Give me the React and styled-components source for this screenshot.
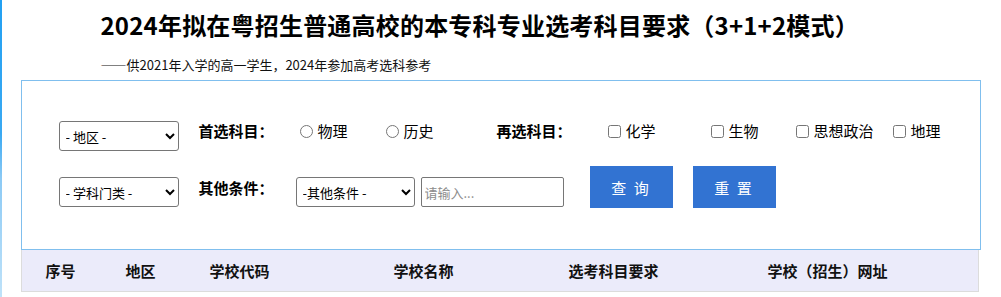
import React from "react";
import styled, { createGlobalStyle } from "styled-components";

const GlobalStyle = createGlobalStyle`
  html {
    background: #fff linear-gradient(to bottom, #22a0f2 0%, #3aa9f2 45%, #8ccaf5 60%, #bfe2f9 100%) left top / 2px 100% no-repeat;
    min-height: 100%;
  }
  body {
    margin: 0;
    font-family: "Microsoft YaHei", "Noto Sans CJK SC", "Noto Sans", sans-serif;
    color: #000;
  }
`;

const Page = styled.div`
  width: 1001px;
`;

const Heading = styled.header`
  width: 800px;
  margin: 0 auto;
`;

const Title = styled.h1`
  margin: 0;
  font-size: 24px;
  font-weight: 700;
  line-height: 50px;
  white-space: nowrap;
  letter-spacing: 0.2px;
`;

const Subtitle = styled.p`
  margin: 0;
  font-size: 13px;
  line-height: 30px;
  color: #111;
`;

const Dash = styled.span`
  font-feature-settings: "fwid";
`;

const Container = styled.div`
  width: 960px;
  margin: 0 auto;
`;

const SearchBox = styled.div`
  box-sizing: border-box;
  width: 960px;
  border: 1px solid #80bfee;
  padding: 40px 0 41px 37px;
  display: flex;
  flex-direction: column;
  gap: 15px;
`;

const Row = styled.div`
  display: flex;
  align-items: ${(p) => (p.$bottom ? "flex-end" : "flex-start")};
  height: ${(p) => p.$h}px;
`;

const Select = styled.select`
  box-sizing: border-box;
  width: ${(p) => p.$w}px;
  height: 30px;
  margin: 0 ${(p) => p.$mr || 0}px ${(p) => p.$mb || 0}px 0;
  border: 1px solid #767676;
  border-radius: 3px;
  background: #fff;
  font-family: inherit;
  font-size: 13px;
  color: #000;
  padding: 0 2px;
`;

const TextInput = styled.input`
  box-sizing: border-box;
  width: 143px;
  height: 30px;
  margin: 0 0 1px 6px;
  border: 1px solid #767676;
  border-radius: 2px;
  padding: 0 3px;
  font-family: inherit;
  font-size: 13px;
  &::placeholder {
    color: #8c8c8c;
  }
`;

const Label = styled.span`
  box-sizing: border-box;
  width: ${(p) => p.$w}px;
  margin-left: ${(p) => p.$ml || 0}px;
  margin-bottom: ${(p) => p.$mb || 0}px;
  font-size: 15px;
  font-weight: 700;
  line-height: 20px;
  white-space: nowrap;
`;

const Option = styled.label`
  display: flex;
  align-items: center;
  gap: 5px;
  width: ${(p) => (p.$w ? `${p.$w}px` : "auto")};
  height: 20px;
  font-size: 15px;
  line-height: 20px;
  white-space: nowrap;
  input {
    margin: 0;
    width: 13px;
    height: 13px;
  }
`;

const Button = styled.button`
  width: 83px;
  height: 42px;
  margin-left: ${(p) => p.$ml}px;
  border: none;
  background: #3273d2;
  color: #fff;
  font-family: inherit;
  font-size: 15px;
  letter-spacing: 2px;
  padding: 0;
  cursor: pointer;
`;

const Table = styled.table`
  width: 958px;
  border-collapse: collapse;
  table-layout: fixed;
  border: 1px solid #dcdcdc;
  border-top: none;
  background: #ebebfa;
`;

const Th = styled.th`
  width: ${(p) => (p.$w ? `${p.$w}px` : "auto")};
  height: 41px;
  padding: 0;
  font-size: 15px;
  font-weight: 700;
  text-align: center;
  color: #111;
`;

const columns = [
  { t: "序号", w: 78 },
  { t: "地区", w: 82 },
  { t: "学校代码", w: 116 },
  { t: "学校名称", w: 252 },
  { t: "选考科目要求", w: 128 },
  { t: "学校（招生）网址" },
];

export default function App() {
  return (
    <Page>
      <GlobalStyle />
      <Heading>
        <Title>2024年拟在粤招生普通高校的本专科专业选考科目要求（3+1+2模式）</Title>
        <Subtitle>
          <Dash>——</Dash>供2021年入学的高一学生，2024年参加高考选科参考
        </Subtitle>
      </Heading>
      <Container>
        <SearchBox>
          <Row $h={30}>
            <Select $w={120}>
              <option>- 地区 -</option>
            </Select>
            <Label $w={101} $ml={20}>首选科目：</Label>
            <Option $w={86}>
              <input type="radio" name="first" />物理
            </Option>
            <Option $w={111}>
              <input type="radio" name="first" />历史
            </Option>
            <Label $w={111}>再选科目：</Label>
            <Option $w={103}>
              <input type="checkbox" />化学
            </Option>
            <Option $w={85}>
              <input type="checkbox" />生物
            </Option>
            <Option $w={97}>
              <input type="checkbox" />思想政治
            </Option>
            <Option>
              <input type="checkbox" />地理
            </Option>
          </Row>
          <Row $h={42} $bottom>
            <Select $w={120} $mb={1}>
              <option>- 学科门类 -</option>
            </Select>
            <Label $w={97} $ml={20} $mb={10}>其他条件：</Label>
            <Select $w={119} $mb={1}>
              <option>-其他条件 -</option>
            </Select>
            <TextInput placeholder="请输入..." />
            <Button $ml={26}>查 询</Button>
            <Button $ml={20}>重 置</Button>
          </Row>
        </SearchBox>
        <Table>
          <thead>
            <tr>
              {columns.map((c) => (
                <Th key={c.t} $w={c.w}>{c.t}</Th>
              ))}
            </tr>
          </thead>
        </Table>
      </Container>
    </Page>
  );
}
